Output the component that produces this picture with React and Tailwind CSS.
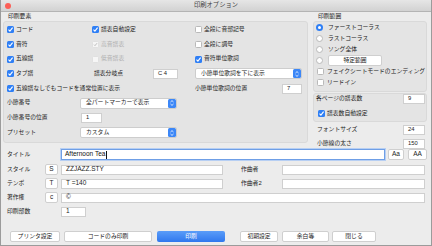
const Check = ({ on, disabled }) => {
  if (disabled) {
    return (
      <span className="w-[7px] h-[7px] shrink-0 rounded-[1.5px] border border-[#e0e0e0] bg-[#f6f6f6] flex items-center justify-center">
        {on && (
          <svg width="7" height="7" viewBox="0 0 7 7">
            <path d="M1.4 3.7 L2.8 5.1 L5.7 1.6" stroke="#a8a8a8" strokeWidth="1" fill="none" />
          </svg>
        )}
      </span>
    )
  }
  return on ? (
    <span className="w-[7px] h-[7px] shrink-0 rounded-[1.5px] bg-[#2f7ff5] flex items-center justify-center">
      <svg width="7" height="7" viewBox="0 0 7 7">
        <path d="M1.5 3.7 L2.9 5.1 L5.6 1.7" stroke="white" strokeWidth="1.1" fill="none" />
      </svg>
    </span>
  ) : (
    <span className="w-[7px] h-[7px] shrink-0 rounded-[1.5px] border border-[#b9b9b9] bg-white" />
  )
}

const CheckItem = ({ on, disabled, label, className = '' }) => (
  <div className={`flex items-center gap-[2px] shrink-0 ${className}`}>
    <Check on={on} disabled={disabled} />
    <span className={disabled ? 'text-[#b0b0b0]' : 'text-[#1c1c1c]'}>{label}</span>
  </div>
)

const Radio = ({ on }) =>
  on ? (
    <span className="w-[7px] h-[7px] shrink-0 rounded-full bg-[#2f7ff5] flex items-center justify-center">
      <span className="w-[2.5px] h-[2.5px] rounded-full bg-white" />
    </span>
  ) : (
    <span className="w-[7px] h-[7px] shrink-0 rounded-full border border-[#b9b9b9] bg-white" />
  )

const Field = ({ value, className = '' }) => (
  <div className={`h-[10px] shrink-0 bg-white border border-[#cfcfcf] flex items-center pl-[4px] text-[#1c1c1c] ${className}`}>
    {value}
  </div>
)

const Select = ({ value, className = '' }) => (
  <div className={`h-[11px] shrink-0 bg-white border border-[#cdcdcd] rounded-[2px] flex items-center justify-between pl-[5px] text-[#1c1c1c] ${className}`}>
    <span>{value}</span>
    <span className="w-[8px] h-[9px] mr-[0.5px] rounded-[1.5px] bg-[#3c87f7] flex items-center justify-center">
      <svg width="6" height="8" viewBox="0 0 6 8">
        <path d="M1.5 3 L3 1.6 L4.5 3 M1.5 5 L3 6.4 L4.5 5" stroke="white" strokeWidth="0.8" fill="none" />
      </svg>
    </span>
  </div>
)

const Btn = ({ label, className = '', primary }) => (
  <div
    className={`h-[11px] shrink-0 rounded-[2px] flex items-center justify-center ${
      primary
        ? 'bg-gradient-to-b from-[#5a9cf8] to-[#2f77ee] text-white'
        : 'bg-white border border-[#cfcfcf] text-[#1c1c1c]'
    } ${className}`}
  >
    {label}
  </div>
)

export default function App() {
  return (
    <div className="w-[432px] h-[246px] bg-[#ececec] border-x border-b border-[#9b9b9b] overflow-hidden whitespace-nowrap text-[5.8px] leading-none text-[#1c1c1c] font-['Liberation_Sans','Noto_Sans_CJK_JP',sans-serif]">
      {/* title bar */}
      <div className="h-[12px] bg-gradient-to-b from-[#e6e6e6] to-[#d2d2d2] border-b border-[#b4b4b4] flex items-center relative">
        <span className="ml-[4px] w-[6px] h-[6px] rounded-full bg-[#fc5f57]" />
        <span className="absolute left-0 right-0 text-center text-[6.3px] text-[#444]">印刷オプション</span>
      </div>

      {/* top area */}
      <div className="flex">
        {/* left group */}
        <div className="ml-[2px] w-[305px] shrink-0">
          <div className="h-[9px] pl-[5px] flex items-center">印刷要素</div>
          <div className="h-[122px] bg-[#e4e4e4] border border-[#d9d9d9] rounded-[3px] pt-[0.5px]">
            <div className="h-[14.7px] flex items-center">
              <CheckItem on label="コード" className="w-[88px] pl-[3px]" />
              <CheckItem on label="譜表自動設定" className="w-[103px]" />
              <CheckItem label="全段に音部記号" />
            </div>
            <div className="h-[14.7px] flex items-center">
              <CheckItem on label="音符" className="w-[88px] pl-[3px]" />
              <CheckItem on disabled label="高音譜表" className="w-[103px]" />
              <CheckItem label="全段に調号" />
            </div>
            <div className="h-[14.7px] flex items-center">
              <CheckItem on label="五線譜" className="w-[88px] pl-[3px]" />
              <CheckItem disabled label="低音譜表" className="w-[103px]" />
              <CheckItem on label="音符単位歌詞" />
            </div>
            <div className="h-[14.7px] flex items-center">
              <CheckItem on label="タブ譜" className="w-[88px] pl-[3px]" />
              <div className="w-[103px] shrink-0 flex items-center">
                <span className="w-[61px] pl-[2px]">譜表分岐点</span>
                <Field value="C 4" className="w-[25px]" />
              </div>
              <Select value="小節単位歌詞を下に表示" className="w-[107px]" />
            </div>
            <div className="h-[14.7px] flex items-center">
              <CheckItem on label="五線譜なしでもコードを通常位置に表示" className="w-[191px] pl-[3px]" />
              <span className="w-[87px] shrink-0">小節単位歌詞の位置</span>
              <Field value="7" className="w-[20px]" />
            </div>
            <div className="h-[14.7px] flex items-center">
              <span className="w-[76px] shrink-0 pl-[3px]">小節番号</span>
              <Select value="全パートマーカーで表示" className="w-[97px]" />
            </div>
            <div className="h-[14.7px] flex items-center">
              <span className="w-[77px] shrink-0 pl-[3px]">小節番号の位置</span>
              <Field value="1" className="w-[21px]" />
            </div>
            <div className="h-[14.7px] flex items-center">
              <span className="w-[76px] shrink-0 pl-[3px]">プリセット</span>
              <Select value="カスタム" className="w-[97px]" />
            </div>
          </div>
        </div>

        {/* right group */}
        <div className="ml-[5px] w-[114px] shrink-0">
          <div className="h-[9px] pl-[5px] flex items-center">印刷範囲</div>
          <div className="h-[71px] bg-[#e4e4e4] border border-[#d9d9d9] rounded-[3px] pl-[2px]">
            <div className="h-[11px] flex items-center gap-[5px]">
              <Radio on />
              <span>ファーストコーラス</span>
            </div>
            <div className="h-[11px] flex items-center gap-[5px]">
              <Radio />
              <span>ラストコーラス</span>
            </div>
            <div className="h-[11px] flex items-center gap-[5px]">
              <Radio />
              <span>ソング全体</span>
            </div>
            <div className="h-[11px] flex items-center gap-[5px]">
              <Radio />
              <Btn label="特定範囲" className="w-[54px] h-[9px]" />
            </div>
            <div className="h-[11px] flex items-center gap-[3px] pl-[1px]">
              <Check />
              <span>フェイクシートモードのエンディング</span>
            </div>
            <div className="h-[11px] flex items-center gap-[3px] pl-[1px]">
              <Check />
              <span>リードイン</span>
            </div>
          </div>
          <div className="mt-[1px] h-[29px] bg-[#e4e4e4] border border-[#d9d9d9] rounded-[3px] pl-[2px] pr-[1px]">
            <div className="h-[10px] flex items-center justify-between">
              <span>各ページの譜表数</span>
              <Field value="9" className="w-[22px]" />
            </div>
            <div className="mt-[4px] h-[11px] flex items-center gap-[2px] pl-[2px]">
              <Check on />
              <span>譜表数自動設定</span>
            </div>
          </div>
          <div className="mt-[3px] h-[10px] flex items-center justify-between pl-[4px] pr-[2px]">
            <span>フォントサイズ</span>
            <Field value="24" className="w-[22px]" />
          </div>
          <div className="mt-[4px] h-[10px] flex items-center justify-between pl-[4px] pr-[2px]">
            <span>小節線の太さ</span>
            <Field value="150" className="w-[22px]" />
          </div>
        </div>
      </div>

      {/* info fields */}
      <div className="pl-[6px]">
        <div className="h-[11px] flex items-center">
          <span className="w-[54px] shrink-0">タイトル</span>
          <div className="w-[324px] h-[11px] shrink-0 bg-white border border-[#6f9fe6] ring-1 ring-[#b7cff3] flex items-center pl-[3px] text-[6.5px] text-[#111]">
            Afternoon Tea
            <span className="ml-[1px] w-px h-[8px] bg-[#111]" />
          </div>
          <Btn label="Aa" className="ml-[3px] w-[16px] text-[6.5px]" />
          <Btn label="AA" className="ml-[4px] w-[19px] text-[6.5px]" />
        </div>
        <div className="mt-[4px] h-[11px] flex items-center">
          <span className="w-[38px] shrink-0">スタイル</span>
          <Btn label="S" className="w-[13px] h-[10px] text-[6.5px]" />
          <Field value="ZZJAZZ.STY" className="ml-[3px] w-[162px] text-[6.5px]" />
          <span className="ml-[18px] w-[41px] shrink-0">作曲者</span>
          <Field value="" className="w-[143px]" />
        </div>
        <div className="mt-[3px] h-[11px] flex items-center">
          <span className="w-[38px] shrink-0">テンポ</span>
          <Btn label="T" className="w-[13px] h-[10px] text-[6.5px]" />
          <Field value="T =140" className="ml-[3px] w-[162px] text-[6.5px]" />
          <span className="ml-[18px] w-[41px] shrink-0">作曲者2</span>
          <Field value="" className="w-[143px]" />
        </div>
        <div className="mt-[3px] h-[11px] flex items-center">
          <span className="w-[38px] shrink-0">著作権</span>
          <Btn label="c" className="w-[13px] h-[10px] text-[6.5px]" />
          <Field value="©" className="ml-[3px] w-[364px] text-[6.5px]" />
        </div>
        <div className="mt-[3px] h-[11px] flex items-center">
          <span className="w-[54px] shrink-0">印刷部数</span>
          <Field value="1" className="w-[25px] text-[6.5px]" />
        </div>
      </div>

      {/* buttons */}
      <div className="mt-[14px] flex items-center pl-[9px]">
        <Btn label="プリンタ設定" className="w-[50px]" />
        <Btn label="コードのみ印刷" className="ml-[4px] w-[88px]" />
        <Btn label="印刷" primary className="ml-[5px] w-[68px]" />
        <Btn label="初期設定" className="ml-[15px] w-[38px]" />
        <Btn label="余白等" className="ml-[4px] w-[47px]" />
        <Btn label="閉じる" className="ml-[3px] w-[44px]" />
      </div>
    </div>
  )
}
